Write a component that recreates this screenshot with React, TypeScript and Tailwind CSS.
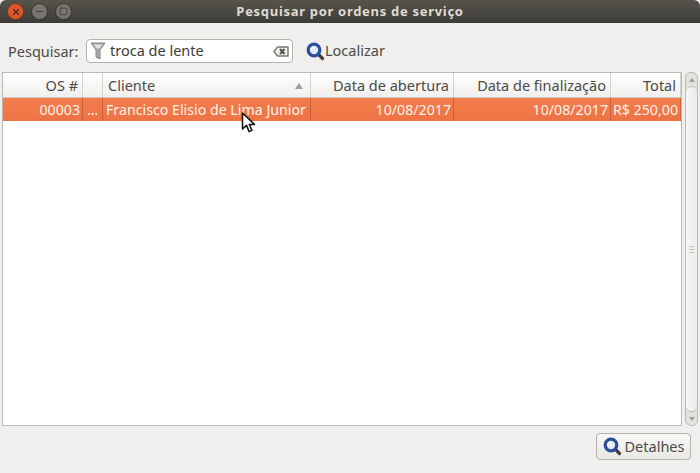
import React from 'react';
import { X, Minus, Square } from 'lucide-react';

const columns = [
  { label: 'OS #', width: 'w-[80px]', align: 'text-right pr-[4px]' },
  { label: '', width: 'w-[20px]', align: '' },
  { label: 'Cliente', width: 'w-[208px]', align: 'text-left pl-[5px]' },
  { label: 'Data de abertura', width: 'w-[143px]', align: 'text-right pr-[4px]' },
  { label: 'Data de finalização', width: 'w-[157px]', align: 'text-right pr-[4px]' },
  { label: 'Total', width: 'w-[70px]', align: 'text-right pr-[4px]' },
];

const cells = [
  { text: '00003', width: 'w-[80px]', align: 'text-right pr-[2px]' },
  { text: '…', width: 'w-[20px]', align: 'text-center' },
  { text: 'Francisco Elisio de Lima Junior', width: 'w-[208px]', align: 'text-left pl-[3px]' },
  { text: '10/08/2017', width: 'w-[143px]', align: 'text-right pr-[2px]' },
  { text: '10/08/2017', width: 'w-[157px]', align: 'text-right pr-[2px]' },
  { text: 'R$ 250,00', width: 'w-[70px]', align: 'text-right pr-[2px]' },
];

const Magnifier = () => (
  <svg width="19" height="19" viewBox="0 0 19 19">
    <line x1="12" y1="12" x2="16.5" y2="16.5" stroke="#4a3f30" strokeWidth="3.2" strokeLinecap="round" />
    <circle cx="8" cy="8" r="5.8" fill="#e4ebf6" stroke="#2c4c9c" strokeWidth="3.2" />
    <path d="M5 7.5a3 3 0 0 1 2.5-2.5" fill="none" stroke="#ffffff" strokeWidth="1.3" />
  </svg>
);

const Funnel = () => (
  <svg width="16" height="20" viewBox="0 0 16 20">
    <path d="M1 2h14l-5 7v9l-4-2V9z" fill="#a9a9a5" stroke="#85857e" strokeWidth="1" strokeLinejoin="round" />
    <path d="M3.5 3.5h9l-3 4h-3z" fill="#dededa" />
  </svg>
);

const ClearIcon = () => (
  <svg width="16" height="11" viewBox="0 0 16 11">
    <path d="M4.5 1H15v9H4.5L1 5.5z" fill="#f0f0ee" stroke="#77756f" strokeWidth="1.4" strokeLinejoin="round" />
    <path d="M7 3l4.5 5M11.5 3L7 8" stroke="#55534e" strokeWidth="2" />
  </svg>
);

const Cursor = () => (
  <svg width="15" height="22" viewBox="0 0 15 22">
    <path d="M1.5 1v16l4-3.6 2.6 6.2 2.8-1.2-2.6-6h5.2z" fill="#ffffff" stroke="#111111" strokeWidth="1.5" strokeLinejoin="round" />
  </svg>
);

export default function App() {
  return (
    <div className="w-[700px] h-[473px] flex flex-col bg-[#f0efed] text-[#3c3b37] text-[14.5px] font-['Noto_Sans',sans-serif] overflow-hidden">
      {/* Title bar */}
      <div className="relative h-[23px] shrink-0 flex items-center justify-center rounded-t-[6px] bg-gradient-to-b from-[#57544c] to-[#3c3b37]">
        <div className="absolute left-0 top-0 h-full flex items-center gap-[7px] pl-[7px]">
          <div className="w-[17px] h-[17px] rounded-full bg-[#e0562b] border border-[#6e3a26] flex items-center justify-center">
            <X size={10} strokeWidth={3} className="text-[#4a2a1c]" />
          </div>
          <div className="w-[17px] h-[17px] rounded-full bg-[#77756d] border border-[#35342f] flex items-center justify-center">
            <Minus size={11} strokeWidth={2} className="text-[#3c3b37]" />
          </div>
          <div className="w-[17px] h-[17px] rounded-full bg-[#77756d] border border-[#35342f] flex items-center justify-center">
            <Square size={9} strokeWidth={2} className="text-[#3c3b37]" />
          </div>
        </div>
        <span className="text-[13px] font-bold text-[#dfdbd2] tracking-[0.7px]">Pesquisar por ordens de serviço</span>
      </div>

      {/* Search */}
      <div className="h-[49px] shrink-0 flex items-start pl-[8px] pt-[16px]">
        <span className="w-[78px] h-[24px] leading-[25px] text-[#4c4b47]">Pesquisar:</span>
        <div className="w-[207px] h-[24px] flex items-center bg-white border border-[#b5b2ab] rounded-[4px] pl-[3px] pr-[3px]">
          <Funnel />
          <span className="ml-[4px] flex-1">troca de lente</span>
          <ClearIcon />
        </div>
        <div className="flex items-center h-[24px] ml-[13px] text-[#4c4b47]">
          <Magnifier />
          <span>Localizar</span>
        </div>
      </div>

      {/* Table and scrollbar */}
      <div className="h-[354px] shrink-0 flex pl-[2px] pr-[2px]">
        <div className="relative w-[680px] border border-[#bcb9b2] bg-white">
          <div className="flex h-[25px] border-b border-[#c9c6bf] bg-gradient-to-b from-white to-[#f0efed]">
            {columns.map((col, i) => (
              <div key={i} className={`relative ${col.width} h-full leading-[25px] border-r border-[#d5d2cc] text-[#4c4b47] ${col.align}`}>
                {col.label}
                {col.label === 'Cliente' && (
                  <span className="absolute right-[7px] top-[10px] w-0 h-0 border-x-[4px] border-x-transparent border-b-[6px] border-b-[#a09e98]" />
                )}
              </div>
            ))}
          </div>
          <div className="flex h-[23px] text-[14.2px] bg-gradient-to-b from-[#f47c4d] to-[#ee7344] text-[#fdf3ec]">
            {cells.map((cell, i) => (
              <div key={i} className={`${cell.width} h-full leading-[23px] border-r border-[#c9623a] whitespace-nowrap overflow-hidden ${cell.align}`}>
                {cell.text}
              </div>
            ))}
          </div>
          <div className="absolute left-[238px] top-[39px]">
            <Cursor />
          </div>
        </div>

        {/* Scrollbar */}
        <div className="ml-[3px] w-[13px] flex flex-col border border-[#bcb9b2] rounded-[6px] bg-[#e4e2de] overflow-hidden">
          <div className="h-[13px] shrink-0 flex items-center justify-center">
            <span className="w-0 h-0 border-x-[3px] border-x-transparent border-b-[4px] border-b-[#a09e98]" />
          </div>
          <div className="flex-1 border-y border-[#bcb9b2] rounded-[6px] bg-gradient-to-r from-[#f7f7f6] to-[#ecebe8] flex flex-col items-center justify-center gap-[2px]">
            <span className="w-[5px] h-[1px] bg-[#c4c2bc]" />
            <span className="w-[5px] h-[1px] bg-[#c4c2bc]" />
            <span className="w-[5px] h-[1px] bg-[#c4c2bc]" />
          </div>
          <div className="h-[13px] shrink-0 flex items-center justify-center">
            <span className="w-0 h-0 border-x-[3px] border-x-transparent border-t-[4px] border-t-[#a09e98]" />
          </div>
        </div>
      </div>

      {/* Footer */}
      <div className="flex-1 flex items-start justify-end pr-[9px] pt-[7px]">
        <div className="h-[27px] w-[95px] flex items-center justify-center gap-[3px] border border-[#b5b2ab] rounded-[4px] bg-gradient-to-b from-[#f8f8f7] to-[#e9e8e5] text-[#4c4b47]">
          <Magnifier />
          <span>Detalhes</span>
        </div>
      </div>
    </div>
  );
}
